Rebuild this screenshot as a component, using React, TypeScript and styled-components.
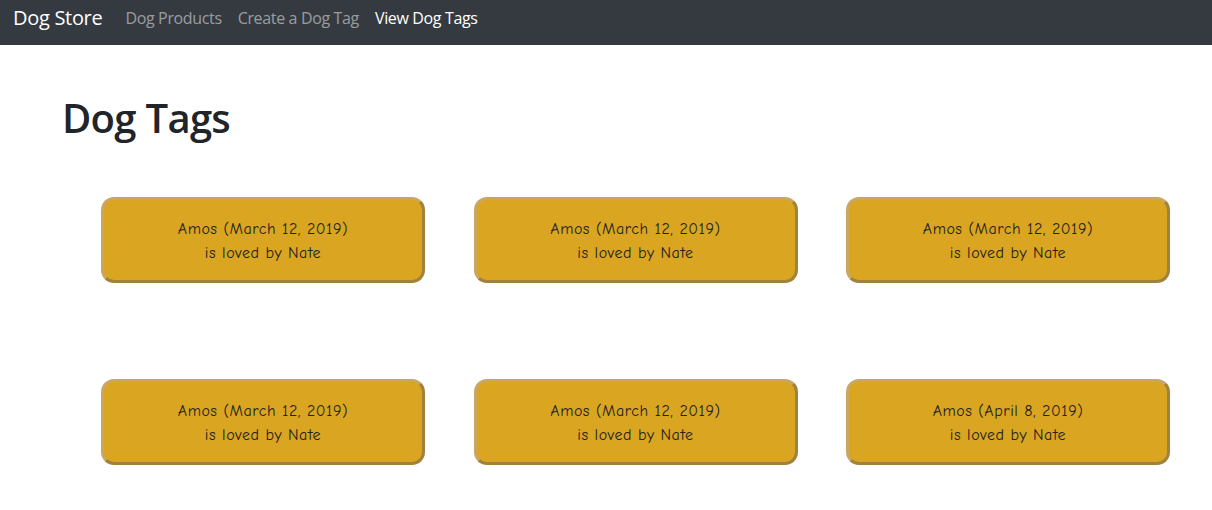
import React from "react";
import styled, { createGlobalStyle } from "styled-components";

const GlobalStyle = createGlobalStyle`
  html, body { margin: 0; padding: 0; background: #fff; }
  body {
    font-family: "Open Sans", "Noto Sans", sans-serif;
    color: #212529;
  }
`;

const NavBar = styled.nav`
  display: flex;
  align-items: center;
  height: 45px;
  background: #343a40;
  padding: 0 13px 10px;
  box-sizing: border-box;
`;

const Brand = styled.a`
  font-size: 20px;
  color: #fff;
  margin-right: 15px;
  text-decoration: none;
  letter-spacing: -0.3px;
`;

const NavLinks = styled.div`
  display: flex;
`;

const NavLink = styled.a<{ $active?: boolean }>`
  font-size: 16px;
  padding: 0 8px;
  letter-spacing: -0.35px;
  color: ${(p) => (p.$active ? "#fff" : "rgba(255,255,255,0.5)")};
  text-decoration: none;
`;

const Main = styled.main`
  padding: 0 0 0 62px;
`;

const Title = styled.h1`
  margin: 49px 0 0;
  font-size: 40px;
  font-weight: 600;
  line-height: 48px;
  letter-spacing: -0.7px;
`;

const TagGrid = styled.div`
  display: grid;
  grid-template-columns: repeat(3, 324px);
  column-gap: 48.5px;
  row-gap: 96px;
  margin: 55px 0 0 39px;
`;

const Tag = styled.div`
  box-sizing: border-box;
  height: 86px;
  background: #daa520;
  border: 3px solid;
  border-color: #c9a760 #a0823d #a0823d #c9a760;
  border-radius: 13px;
  display: flex;
  flex-direction: column;
  align-items: center;
  justify-content: center;
  padding-top: 1px;
  font-family: "Comic Sans MS", "Comic Neue", cursive;
  font-size: 16px;
  letter-spacing: 0.55px;
  line-height: 24px;
  color: #222;
`;

const tags = [
  "Amos (March 12, 2019)",
  "Amos (March 12, 2019)",
  "Amos (March 12, 2019)",
  "Amos (March 12, 2019)",
  "Amos (March 12, 2019)",
  "Amos (April 8, 2019)",
];

export default function App() {
  return (
    <>
      <GlobalStyle />
      <NavBar>
        <Brand>Dog Store</Brand>
        <NavLinks>
          <NavLink>Dog Products</NavLink>
          <NavLink>Create a Dog Tag</NavLink>
          <NavLink $active>View Dog Tags</NavLink>
        </NavLinks>
      </NavBar>
      <Main>
        <Title>Dog Tags</Title>
        <TagGrid>
          {tags.map((t, i) => (
            <Tag key={i}>
              <div>{t}</div>
              <div>is loved by Nate</div>
            </Tag>
          ))}
        </TagGrid>
      </Main>
    </>
  );
}
